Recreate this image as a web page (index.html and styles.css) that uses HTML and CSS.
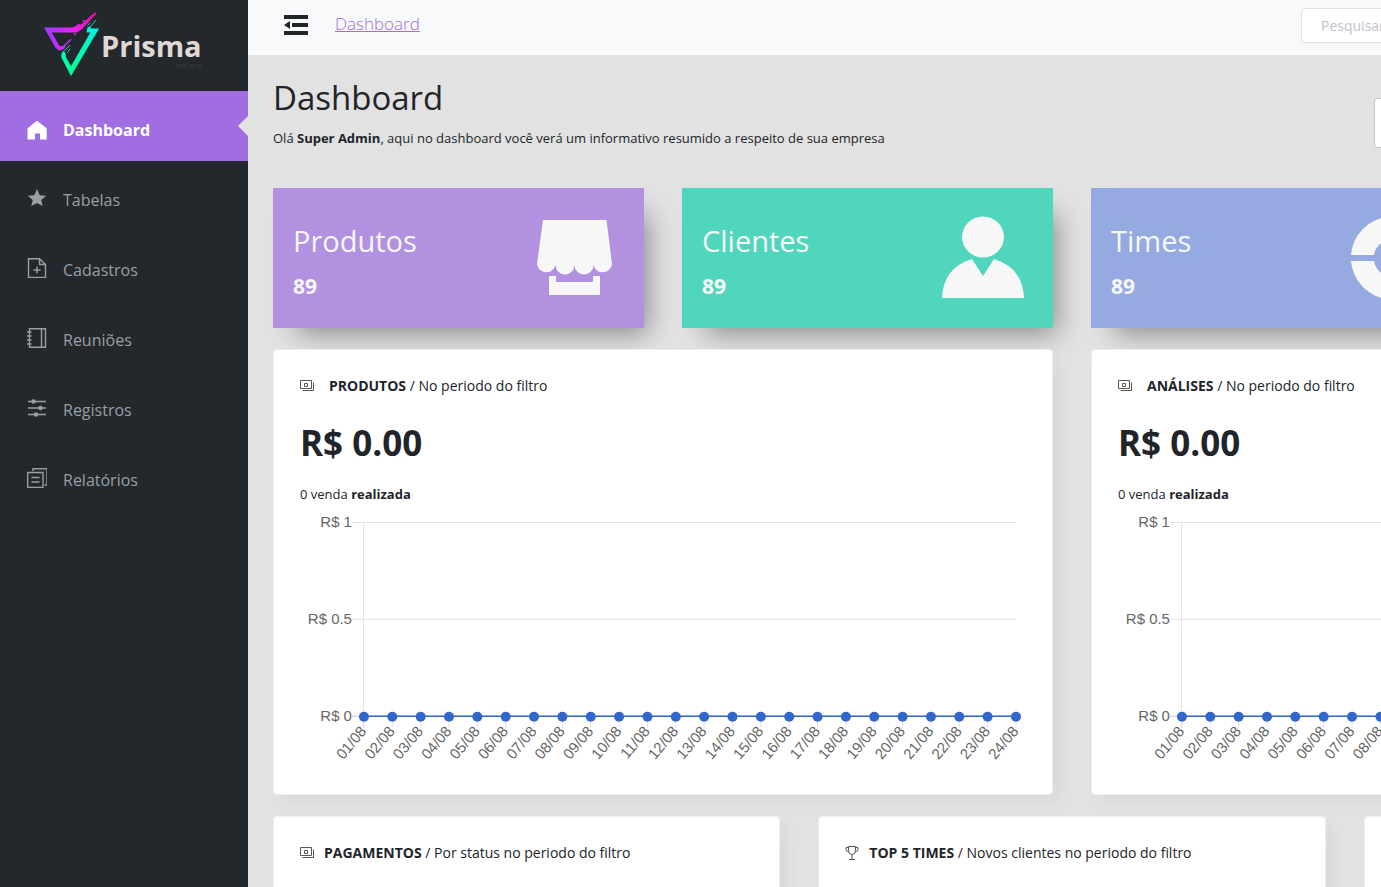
FILE: index.html
```html
<!DOCTYPE html>
<html lang="pt-BR">
<head>
<meta charset="utf-8">
<title>Prisma - Dashboard</title>
<link rel="stylesheet" href="styles.css">
</head>
<body>
<div class="app">
  <aside class="sidebar">
    <a class="brand" href="#">
      <svg class="brand-mark" viewBox="0 0 60 68" aria-hidden="true">
        <defs>
          <linearGradient id="pink" x1="0" x2="1"><stop offset="0" stop-color="#9a3bff"/><stop offset=".55" stop-color="#e722f5"/><stop offset="1" stop-color="#e8109c"/></linearGradient>
          <linearGradient id="green" x1="0" y1="0" x2="0" y2="1"><stop offset="0" stop-color="#00f5e6"/><stop offset="1" stop-color="#00ff8c"/></linearGradient>
        </defs>
        <path fill="url(#pink)" d="M1 17H31L36 14L39 14L54 1L55 3L43 16L40 19L35 22H9L17 36L20 36L24 34L22 39L17 41L13 38Z"/>
        <path d="M22 36L29 29" stroke="#b835f0" stroke-width="1.5"/>
        <path d="M41 10h2M36 14h2M32 24h2" stroke="#e722f5" stroke-width="1.5"/>
        <path fill="url(#green)" d="M46 17L50 15L49 18H58L29 67L19 48L19 44L21 41L23 43L24 48L29 57L49 22H45Z"/>
        <path d="M49 16L55 9M22 41L28 35M25 43L28 39M46 15L49 12" stroke="#00e6ac" stroke-width="1"/>
      </svg>
      <span class="brand-text"><span class="brand-name">Prisma</span><span class="brand-sub">ezCore</span></span>
    </a>
    <nav class="menu">
      <a class="menu-item active" href="#">
        <svg class="menu-icon" viewBox="0 0 20 20"><path fill="currentColor" d="M9 1.4Q10 .6 11 1.4L19 7.800Q19.700 8.500 19.700 9.500V19.500H13V13.500H8V19.500H.5V9.500Q.5 8.500 1.200 7.800Z"/></svg>
        <span>Dashboard</span>
      </a>
      <a class="menu-item" href="#">
        <svg class="menu-icon" viewBox="0 0 20 20"><path fill="currentColor" d="M10 1L12.700 7.200L19.200 7.800L14.200 12.100L15.800 18L10 15L4.200 18L5.800 12.100L.8 7.800L7.300 7.200Z"/></svg>
        <span>Tabelas</span>
      </a>
      <a class="menu-item" href="#">
        <svg class="menu-icon line" viewBox="0 0 20 20"><path d="M1.500.8H12.500L18.500 6.500V19.500H1.500ZM12.500.8V6.500H18.500M10 8.500V15.500M6.500 12H13.500"/></svg>
        <span>Cadastros</span>
      </a>
      <a class="menu-item" href="#">
        <svg class="menu-icon line" viewBox="0 0 20 20"><path d="M2.500.8H18.500V19.200H2.500ZM14.500.8V19.200M0 4H4.500M0 8H4.500M0 12H4.500M0 16H4.500"/></svg>
        <span>Reuniões</span>
      </a>
      <a class="menu-item" href="#">
        <svg class="menu-icon line" viewBox="0 0 20 20"><path d="M1 3.500H19M1 10H19M1 16.500H19"/><g fill="currentColor" stroke="none"><circle cx="6.500" cy="3.500" r="2.200"/><circle cx="13.500" cy="10" r="2.200"/><circle cx="9" cy="16.500" r="2.200"/></g></svg>
        <span>Registros</span>
      </a>
      <a class="menu-item" href="#">
        <svg class="menu-icon line" viewBox="0 0 20 20"><path d="M.7 4.500H16V19.500H.7ZM6 3V.8H20V17H17.500M4.500 9.500H12.500M4.500 14H12.500"/></svg>
        <span>Relatórios</span>
      </a>
    </nav>
  </aside>

  <div class="main">
    <div class="canvas">
      <header class="topbar">
        <button class="toggle" type="button" aria-label="Recolher menu">
          <svg viewBox="0 0 24 20"><path fill="currentColor" d="M0 0H24V4H0ZM8 8H24V12H8ZM0 16H24V20H0ZM6 6V14L0 10Z"/></svg>
        </button>
        <a class="crumb" href="#">Dashboard</a>
        <input class="search" type="search" placeholder="Pesquisar" aria-label="Pesquisar">
      </header>

      <main class="content">
        <div class="heading">
          <div>
            <h1>Dashboard</h1>
            <p>Olá <strong>Super Admin</strong>, aqui no dashboard você verá um informativo resumido a respeito de sua empresa</p>
          </div>
          <input class="period" type="text" aria-label="Período">
        </div>

        <section class="stats">
          <article class="stat purple">
            <div><h2>Produtos</h2><strong>89</strong></div>
            <svg viewBox="0 0 84 84"><path fill="currentColor" d="M11 4H74.500L80 48A9.400 9.400 0 0 1 61.500 49A9.400 9.400 0 0 1 42.500 49A9.400 9.400 0 0 1 23.500 49A9.400 9.400 0 0 1 5 48ZM17 60H24V66H61V60H68V79H17Z"/></svg>
          </article>
          <article class="stat green">
            <div><h2>Clientes</h2><strong>89</strong></div>
            <svg viewBox="0 0 84 84"><ellipse fill="currentColor" cx="42" cy="21" rx="21" ry="20.500"/><path fill="currentColor" d="M1 82Q2 52 31 43L42 60L53 43Q82 52 83 82Z"/></svg>
          </article>
          <article class="stat blue">
            <div><h2>Times</h2><strong>89</strong></div>
            <svg viewBox="0 0 84 84"><path fill="currentColor" d="M1 39A41 41 0 0 1 39 1V24A18 18 0 0 0 24 39ZM1 45A41 41 0 0 0 39 83V60A18 18 0 0 1 24 45ZM45 1A41 41 0 0 1 45 83V60A18 18 0 0 0 45 24Z"/></svg>
          </article>
          <article class="stat purple"></article>
        </section>

        <section class="row halves">
          <article class="panel">
            <h3><svg class="money" viewBox="0 0 14 12"><path d="M.5.500H11.500V8.500H.5ZM13.500 2.500V10.500H2.500M4.500 3.500H7.500V6.500H4.500Z"/></svg><span class="title"><strong>PRODUTOS</strong> / No periodo do filtro</span></h3>
            <div class="amount">R$ 0.00</div>
            <p>0 venda <strong>realizada</strong></p>
            <svg class="chart" viewBox="0 0 727 262" role="img" aria-label="Produtos por dia"></svg>
          </article>
          <article class="panel">
            <h3><svg class="money" viewBox="0 0 14 12"><path d="M.5.500H11.500V8.500H.5ZM13.500 2.500V10.500H2.500M4.500 3.500H7.500V6.500H4.500Z"/></svg><span class="title"><strong>ANÁLISES</strong> / No periodo do filtro</span></h3>
            <div class="amount">R$ 0.00</div>
            <p>0 venda <strong>realizada</strong></p>
            <svg class="chart" viewBox="0 0 727 262" role="img" aria-label="Análises por dia"></svg>
          </article>
        </section>

        <section class="row thirds">
          <article class="panel">
            <h3><svg class="money" viewBox="0 0 14 12"><path d="M.5.500H11.500V8.500H.5ZM13.500 2.500V10.500H2.500M4.500 3.500H7.500V6.500H4.500Z"/></svg><span class="title"><strong>PAGAMENTOS</strong> / Por status no periodo do filtro</span></h3>
          </article>
          <article class="panel">
            <h3><svg class="money" viewBox="0 0 14 14"><path d="M3.500.5H10.500V4.500Q10.500 8.500 7 8.500Q3.500 8.500 3.500 4.500ZM3.500 1.500H1V3Q1 5.500 4 6M10.500 1.500H13V3Q13 5.500 10 6M7 8.500V13M4 13.500H10"/></svg><span class="title"><strong>TOP 5 TIMES</strong> / Novos clientes no periodo do filtro</span></h3>
          </article>
          <article class="panel"></article>
        </section>
      </main>
    </div>
  </div>
</div>
<script src="chart.js"></script>
</body>
</html>
```

FILE: styles.css
```css
* { box-sizing: border-box; }

body {
  margin: 0;
  font-family: "Open Sans", "Noto Sans", sans-serif;
  font-size: 14px;
  color: #212529;
  background: #e2e2e2;
  overflow: hidden;
}

h1, h2, h3, p { margin: 0; }

.app { display: flex; height: 100vh; }

/* Sidebar */
.sidebar { flex: none; width: 248px; background: #23282c; }

.brand {
  display: flex;
  height: 91px;
  padding: 11px 0 0 43px;
  text-decoration: none;
}
.brand-mark { flex: none; width: 58px; height: 66px; }
.brand-text { display: flex; flex-direction: column; padding-top: 20px; }
.brand-name { font-size: 29px; line-height: 30px; font-weight: 700; color: #e0d8d3; }
.brand-sub { font-size: 8px; line-height: 8px; text-align: right; color: #3d4144; }

.menu-item {
  position: relative;
  display: flex;
  align-items: center;
  gap: 16px;
  height: 70px;
  padding: 7px 0 0 27px;
  font-size: 16px;
  color: #9b9ea3;
  text-decoration: none;
}
.menu-icon { width: 20px; height: 20px; margin-bottom: 3px; }
.line { fill: none; stroke: currentColor; stroke-width: 1.4; }
.menu-item.active { background: #a06ee1; color: #fff; font-weight: 700; }
.menu-item.active .menu-icon { margin-bottom: 0; }
.menu-item.active::after {
  content: "";
  position: absolute;
  right: 0;
  top: 25px;
  border: 10px solid transparent;
  border-right-color: #e2e2e2;
  border-left: 0;
}

/* Main area */
.main { flex: 1; min-width: 0; overflow: hidden; }
.canvas { min-width: 1672px; }

.topbar {
  display: flex;
  align-items: flex-start;
  height: 55px;
  padding: 8px 25px 0 36px;
  background: #f8f9fb;
}
.toggle { padding: 7px 0 0; border: 0; background: none; color: #212529; }
.toggle svg { display: block; width: 24px; height: 20px; }
.crumb { margin-left: 27px; font-size: 17px; line-height: 31px; font-weight: 300; color: #a06ee1; }
.search, .period { border: 1px solid #dcdfe6; border-radius: 4px; background: #fff; font: inherit; }
.search { width: 594px; height: 35px; margin-left: auto; padding: 0 19px; font-size: 14px; }
.search::placeholder { color: #c0c4cc; }

.content { padding: 20px 49px 0 25px; }

.heading { display: flex; justify-content: space-between; height: 113px; }
h1 { font-size: 33px; line-height: 46px; font-weight: 500; }
.heading p { padding-top: 7px; font-size: 13px; line-height: 20px; }
.period { width: 497px; height: 50px; margin-top: 23px; border-color: #c0c4cc; padding: 0 16px; }

.stats { display: grid; grid-template-columns: repeat(4, 1fr); gap: 38px; }
.stat {
  display: flex;
  justify-content: space-between;
  align-items: flex-start;
  height: 140px;
  padding: 28px 28px 0 20px;
  color: #f7f7f7;
  box-shadow: 14px 16px 25px -10px rgba(0, 0, 0, .38);
}
.stat h2 { font-size: 29px; line-height: 50px; font-weight: 400; }
.stat strong { font-size: 21px; line-height: 40px; font-weight: 700; }
.stat svg { width: 84px; height: 84px; }
.purple { background: #b291e0; }
.green { background: #4fd6bc; }
.blue { background: #94aae1; }

.row { display: grid; gap: 38px; margin-top: 21px; }
.halves { grid-template-columns: repeat(2, 1fr); }
.thirds { grid-template-columns: repeat(3, 1fr); }
.panel {
  min-height: 160px;
  padding: 26px;
  background: #fff;
  border: 1px solid #ebeef5;
  border-radius: 4px;
  box-shadow: 8px 8px 16px rgba(0, 0, 0, .04);
}
.halves .panel { padding-bottom: 24px; }
.panel h3 { display: flex; align-items: center; gap: 10px; font-size: 14px; line-height: 20px; font-weight: 400; }
.halves h3 { gap: 15px; }
.money { width: 14px; height: 14px; fill: none; stroke: #5d5550; stroke-width: 1; }
.amount { margin-top: 25px; font-size: 35px; line-height: 44px; font-weight: 700; }
.panel p { margin-top: 19px; font-size: 13px; line-height: 20px; }
.chart { display: block; width: 100%; margin-top: 4px; }
.chart text { font-family: "Liberation Sans", Arial, sans-serif; font-size: 15px; fill: #666; text-anchor: end; }
.grid-line { stroke: #e2e2e2; }
.axis { stroke: #c8c8c8; }
.series { stroke: #3366cc; stroke-width: 1.5; }
.dot { fill: #3366cc; }
```

FILE: chart.js
```js
const NS = "http://www.w3.org/2000/svg";
const LEFT = 64, RIGHT = 717, TOP = 14, BOTTOM = 208, DAYS = 24;

function add(parent, tag, attrs, text) {
  const el = document.createElementNS(NS, tag);
  for (const key in attrs) el.setAttribute(key, attrs[key]);
  if (text) el.textContent = text;
  parent.appendChild(el);
}

document.querySelectorAll(".chart").forEach(chart => {
  const line = (x1, y1, x2, y2, cls) => add(chart, "line", { x1, y1, x2, y2, class: cls });
  ["R$ 1", "R$ 0.5", "R$ 0"].forEach((label, i) => {
    const y = TOP + i * (BOTTOM - TOP) / 2;
    line(LEFT - 12, y + .5, RIGHT, y + .5, i === 2 ? "axis" : "grid-line");
    add(chart, "text", { x: 52, y: y + 5 }, label);
  });
  line(LEFT - .5, TOP, LEFT - .5, BOTTOM + 12, "grid-line");
  line(LEFT, BOTTOM + .5, RIGHT, BOTTOM + .5, "series");
  for (let i = 0; i < DAYS; i++) {
    const x = LEFT + i * (RIGHT - LEFT) / (DAYS - 1);
    line(x, BOTTOM, x, BOTTOM + 12, "grid-line");
    add(chart, "circle", { cx: x, cy: BOTTOM + 1, r: 5, class: "dot" });
    const label = String(i + 1).padStart(2, "0") + "/08";
    add(chart, "text", { transform: `translate(${x + 1} ${BOTTOM + 14}) rotate(-50)`, y: 3 }, label);
  }
});
```
